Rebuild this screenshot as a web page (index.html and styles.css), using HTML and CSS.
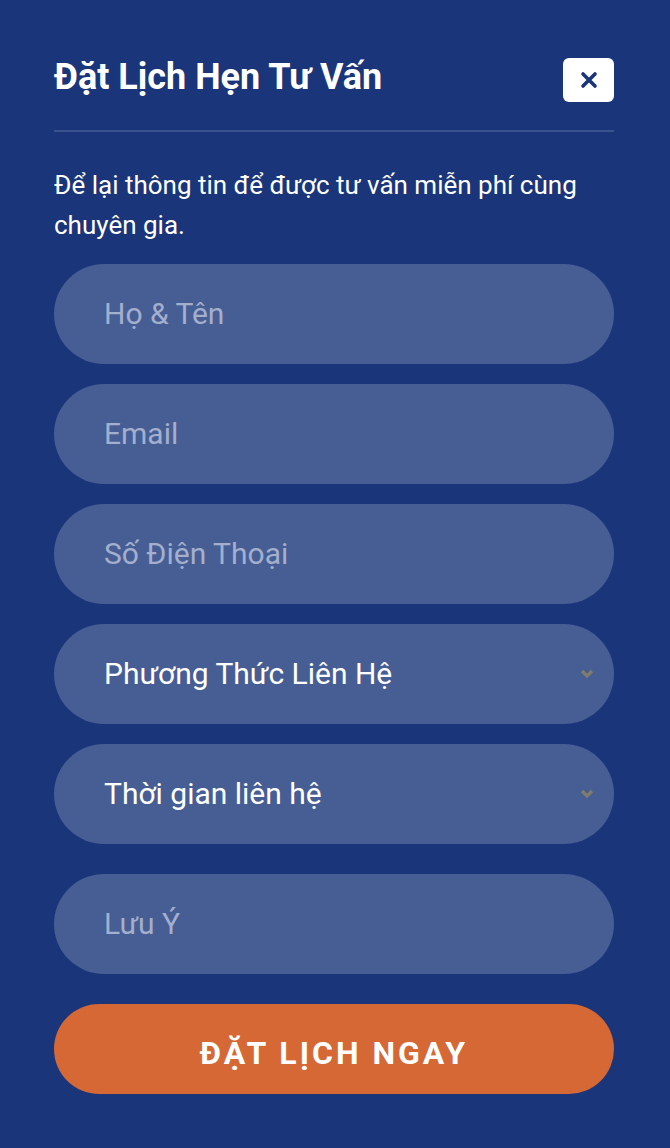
FILE: index.html
```html
<!DOCTYPE html>
<html lang="vi">
<head>
<meta charset="utf-8">
<link rel="stylesheet" href="styles.css">
</head>
<body>
<div class="modal">
  <div class="header">
    <h1 class="title">Đặt Lịch Hẹn Tư Vấn</h1>
    <button class="close" type="button" aria-label="Đóng">
      <svg width="18" height="18" viewBox="0 0 18 18"><path d="M3 3 L15 15 M15 3 L3 15" stroke="#1a3579" stroke-width="3.6" stroke-linecap="round"/></svg>
    </button>
  </div>
  <div class="divider"></div>
  <p class="intro">Để lại thông tin để được tư vấn miễn phí cùng chuyên gia.</p>
  <form class="form">
    <input class="field" type="text" placeholder="Họ &amp; Tên">
    <input class="field" type="email" placeholder="Email">
    <input class="field" type="tel" placeholder="Số Điện Thoại">
    <div class="select-wrap">
      <select class="field select"><option>Phương Thức Liên Hệ</option></select>
      <svg class="chev" width="14" height="10" viewBox="0 0 14 10"><path d="M2 2 L7 7 L12 2" stroke="#7f7b6e" stroke-width="3.2" fill="none"/></svg>
    </div>
    <div class="select-wrap">
      <select class="field select"><option>Thời gian liên hệ</option></select>
      <svg class="chev" width="14" height="10" viewBox="0 0 14 10"><path d="M2 2 L7 7 L12 2" stroke="#7f7b6e" stroke-width="3.2" fill="none"/></svg>
    </div>
    <input class="field note" type="text" placeholder="Lưu Ý">
    <button class="submit" type="button">ĐẶT LỊCH NGAY</button>
  </form>
</div>
</body>
</html>
```
FILE: styles.css
```css
html, body {
  margin: 0;
  padding: 0;
  background: #1a3579;
}
body {
  font-family: Roboto, "Noto Sans", Arial, sans-serif;
  color: #ffffff;
}
.modal {
  padding: 58px 56px 54px 54px;
}
.header {
  display: flex;
  align-items: center;
  justify-content: space-between;
  height: 44px;
}
.title {
  margin: 0;
  font-size: 36px;
  font-weight: 700;
  line-height: 40px;
  margin-top: -6px;
}
.close {
  width: 51px;
  height: 44px;
  border: none;
  border-radius: 6px;
  background: #ffffff;
  display: flex;
  align-items: center;
  justify-content: center;
  padding: 0;
}
.divider {
  margin-top: 28px;
  height: 2px;
  background: #3a5290;
}
.intro {
  margin: 33px 0 0 0;
  font-size: 26px;
  line-height: 40px;
  padding-right: 20px;
}
.form {
  margin-top: 19px;
  display: flex;
  flex-direction: column;
  gap: 20px;
}
.field {
  display: block;
  box-sizing: border-box;
  width: 100%;
  height: 100px;
  border: none;
  border-radius: 50px;
  background: #465e94;
  padding: 0 50px 2px 50px;
  font-family: Roboto, "Noto Sans", Arial, sans-serif;
  font-size: 30px;
  color: #ffffff;
  outline: none;
}
.field::placeholder {
  color: #a3afcd;
}
.select-wrap {
  position: relative;
}
.select {
  appearance: none;
  -webkit-appearance: none;
}
.chev {
  position: absolute;
  right: 20px;
  top: 45px;
}
.note {
  margin-top: 10px;
}
.submit {
  margin-top: 10px;
  height: 90px;
  border: none;
  border-radius: 45px;
  background: #d56835;
  color: #ffffff;
  font-family: Roboto, "Noto Sans", Arial, sans-serif;
  font-size: 32px;
  font-weight: 700;
  letter-spacing: 3px;
  padding: 7px 0 0 0;
}
```
